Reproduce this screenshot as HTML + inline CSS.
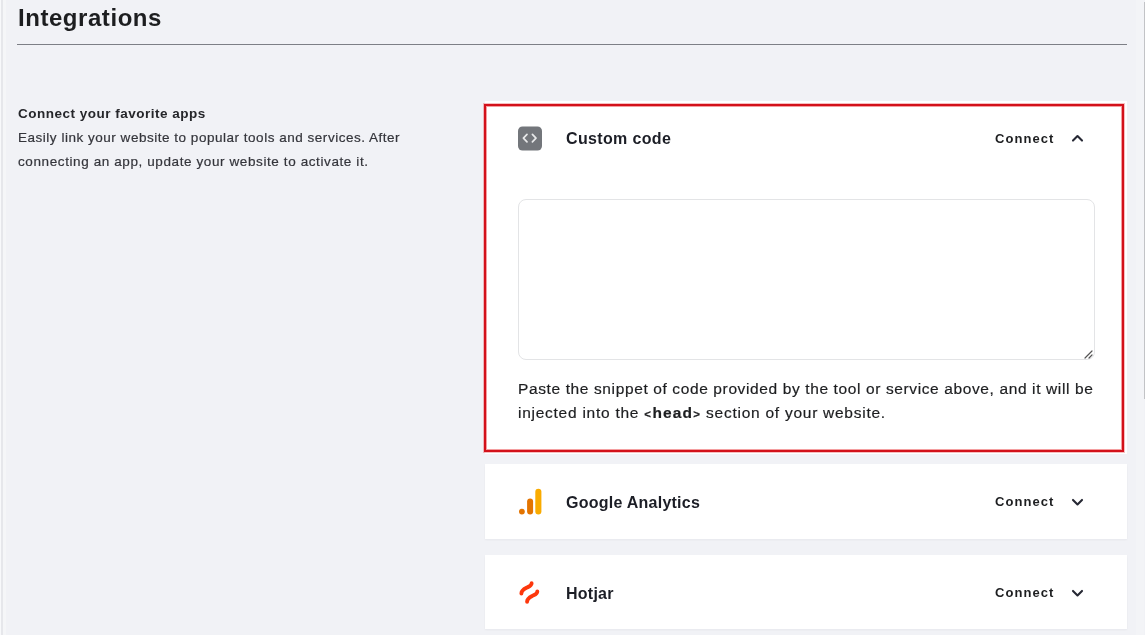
<!DOCTYPE html>
<html><head><meta charset="utf-8">
<style>
*{box-sizing:border-box;margin:0;padding:0}
html,body{width:1145px;height:635px;overflow:hidden;background:#f1f2f6;font-family:"Liberation Sans",sans-serif;color:#1d1e20}
.a{position:absolute;white-space:nowrap}
.t{will-change:transform}
.lb0{left:0;top:0;width:1px;height:635px;background:#f8f9fb}
.lb1{left:1px;top:0;width:2px;height:635px;background:#e6e7eb}
.lb2{left:3px;top:0;width:3px;height:635px;background:#f5f6f8}
.rs{left:1136px;top:0;width:8px;height:635px;background:#f3f4f7}
.rb{left:1144px;top:2px;width:1px;height:397px;background:#c2c3c6}
h1{position:absolute;left:18px;top:3.2px;font-size:24px;font-weight:bold;line-height:30px;color:#1d1e20;letter-spacing:0.55px}
.hr{left:17px;top:44px;width:1110px;height:1px;background:#7d7f86}
.lt{left:18px;top:104.5px;font-size:13.5px;font-weight:bold;line-height:18px;color:#25262a;letter-spacing:0.5px}
.ld{left:18px;top:126px;font-size:13.5px;line-height:24px;color:#34353b;letter-spacing:0.52px;-webkit-text-stroke:0.2px #34353b}
.card{background:#fff;box-shadow:0 1px 2px rgba(30,35,60,.05)}
.red{border:2px solid #d3111a;background:#fff;box-shadow:0 0 0 1px rgba(230,40,45,.3),inset 0 0 0 1px rgba(230,40,45,.45)}
.ttl{font-size:16px;font-weight:bold;color:#1c1e26;line-height:20px;left:566px;letter-spacing:0.25px}
.con{font-size:13px;font-weight:bold;color:#1d1e20;line-height:20px;left:995px;letter-spacing:1.05px}
.chev{left:1070px}
.ta{left:518px;top:199px;width:577px;height:161px;border:1px solid #e3e4e6;border-radius:8px;background:#fff}
.para{left:517.5px;top:376.6px;font-size:15.5px;line-height:24px;color:#1d1e20;letter-spacing:0.62px;-webkit-text-stroke:0.2px #1d1e20}
</style></head>
<body>
<div class="a lb0"></div><div class="a lb1"></div><div class="a lb2"></div>
<div class="a rs"></div>
<div class="a rb"></div>
<h1 class="t">Integrations</h1>
<div class="a hr"></div>
<div class="a t lt">Connect your favorite apps</div>
<div class="a t ld">Easily link your website to popular tools and services. After<br><span style="letter-spacing:0.6px">connecting an app, update your website to activate it.</span></div>

<div class="a" style="left:485px;top:101px;width:642px;height:353px;background:#fff"></div><div class="a red" style="left:484px;top:104px;width:640px;height:348px"></div>
<svg class="a" style="left:518px;top:126px" width="24" height="25" viewBox="0 0 24 25"><rect y="0.5" width="24" height="24" rx="4.5" fill="#73767b"/><path d="M9 8.4 L5.4 12.1 L9 15.8 M14.4 8.4 L18 12.1 L14.4 15.8" stroke="#e8e9ea" stroke-width="1.7" fill="none" stroke-linecap="round" stroke-linejoin="round"/></svg>
<div class="a t ttl" style="top:129px;letter-spacing:0.35px">Custom code</div>
<div class="a t con" style="top:129px">Connect</div>
<svg class="a chev" style="top:131px" width="16" height="14" viewBox="0 0 16 14"><path d="M3 9.6 L7.5 5.1 L12 9.6" stroke="#262834" stroke-width="2.1" fill="none" stroke-linecap="round" stroke-linejoin="round"/></svg>
<div class="a ta"></div>
<svg class="a" style="left:1082px;top:348px" width="12" height="12" viewBox="0 0 12 12"><path d="M3 10 L10 3 M7 10 L10 7" stroke="#555" stroke-width="1.2" stroke-linecap="round"/></svg>
<div class="a t para">Paste the snippet of code provided by the tool or service above, and it will be<br><span style="letter-spacing:0.74px">injected into the <b style="letter-spacing:1.15px"><span style="font-size:11.5px;letter-spacing:1.5px;vertical-align:0.5px">&lt;</span>head<span style="font-size:11.5px;vertical-align:0.5px">&gt;</span></b> section of your website.</span></div>

<div class="a card" style="left:485px;top:464px;width:642px;height:75px"></div>
<svg class="a" style="left:514px;top:485px" width="32" height="32" viewBox="0 0 32 32"><rect x="21.3" y="3.8" width="6.1" height="25.7" rx="3.05" fill="#f9ab00"/><rect x="13.1" y="13.4" width="6" height="16.1" rx="3" fill="#e37400"/><circle cx="7.9" cy="26.6" r="2.9" fill="#e37400"/></svg>
<div class="a t ttl" style="top:492.6px">Google Analytics</div>
<div class="a t con" style="top:491.5px">Connect</div>
<svg class="a chev" style="top:494.5px" width="16" height="14" viewBox="0 0 16 14"><path d="M3 4.9 L7.5 9.4 L12 4.9" stroke="#262834" stroke-width="2.1" fill="none" stroke-linecap="round" stroke-linejoin="round"/></svg>

<div class="a card" style="left:485px;top:555px;width:642px;height:74px"></div>
<svg class="a" style="left:514px;top:578px" width="30" height="30" viewBox="0 0 30 30"><path d="M7.4 15.5 C7.4 12.5 9.5 11.3 12.5 9.8 C15.5 8.3 17.6 7.8 17.6 5.3 M13.1 23.7 C13.1 20.7 15.2 19.5 18.2 18 C21.2 16.5 23.3 16 23.3 13.5" stroke="#fd370c" stroke-width="3.9" fill="none" stroke-linecap="round"/></svg>
<div class="a t ttl" style="top:583.5px">Hotjar</div>
<div class="a t con" style="top:582.8px">Connect</div>
<svg class="a chev" style="top:585.5px" width="16" height="14" viewBox="0 0 16 14"><path d="M3 4.9 L7.5 9.4 L12 4.9" stroke="#262834" stroke-width="2.1" fill="none" stroke-linecap="round" stroke-linejoin="round"/></svg>
</body></html>
